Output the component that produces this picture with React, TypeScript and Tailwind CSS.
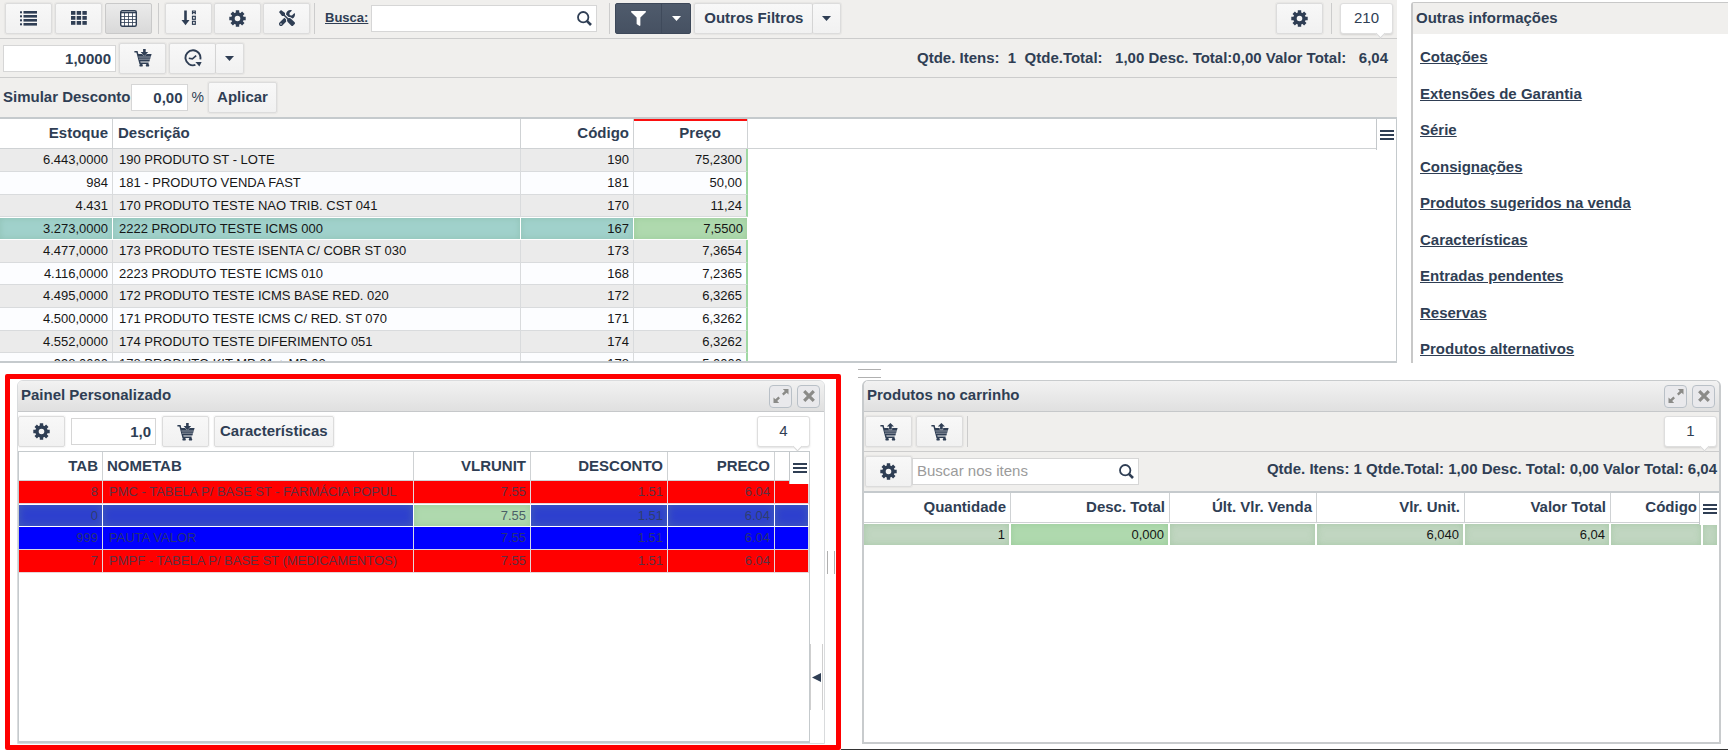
import type { ReactNode } from "react";
import { FaFilter, FaTools } from "react-icons/fa";

const BTN =
  "flex h-[31px] items-center justify-center rounded-[2px] border border-[#dcdcdc] bg-gradient-to-b from-[#f8f8f8] to-[#f1f1f1] shadow-[0_0_1px_1px_rgba(0,0,0,0.04)]";

function ListIcon() {
  return (
    <svg width="17" height="15" viewBox="0 0 17 15" fill="currentColor" aria-hidden="true">
      {[0, 4, 8, 12].map((y) => (
        <g key={y}>
          <rect x="0" y={y + 0.3} width="2" height="2" />
          <rect x="3.5" y={y} width="13.5" height="2.6" />
        </g>
      ))}
    </svg>
  );
}

function GridIcon() {
  return (
    <svg width="16" height="14" viewBox="0 0 16 14" fill="currentColor" aria-hidden="true">
      {[0, 5, 10].map((y) =>
        [0, 5.7, 11.4].map((x) => <rect key={`${x}-${y}`} x={x} y={y} width="4.4" height="3.8" />)
      )}
    </svg>
  );
}

function TableIcon() {
  return (
    <svg width="17" height="17" viewBox="0 0 17 17" aria-hidden="true">
      <rect x="0.7" y="0.7" width="15.6" height="15.6" rx="1.5" fill="#fff" stroke="currentColor" strokeWidth="1.4" />
      <path d="M1 2.6H16" stroke="currentColor" strokeWidth="1.4" />
      <path d="M1 6.5H16M1 9.5H16M1 12.5H16M4.5 3V16M8.5 3V16M12.5 3V16" stroke="currentColor" strokeWidth="0.8" />
    </svg>
  );
}

function GearIcon() {
  return (
    <svg width="17" height="17" viewBox="0 0 17 17" fill="none" stroke="currentColor" aria-hidden="true">
      <circle cx="8.5" cy="8.5" r="4.5" strokeWidth="3.4" />
      {[0, 45, 90, 135].map((a) => (
        <path
          key={a}
          d="M8.5 0.3V3.5M8.5 13.5V16.7"
          strokeWidth="3.4"
          transform={`rotate(${a} 8.5 8.5)`}
        />
      ))}
    </svg>
  );
}

function SortIcon() {
  return (
    <svg width="16" height="16" viewBox="0 0 16 16" fill="none" stroke="currentColor" aria-hidden="true">
      <path d="M4.5 0.5V11" strokeWidth="2.6" />
      <path d="M0.5 10H8.5L4.5 15.2Z" fill="currentColor" stroke="none" />
      <path d="M11.5 4.2V1H14.3V4.2M11.5 2.7H14.3" strokeWidth="1.2" />
      <rect x="11.5" y="6.3" width="2.8" height="3" strokeWidth="1.2" />
      <rect x="11.5" y="11.3" width="2.8" height="3" strokeWidth="1.2" />
    </svg>
  );
}

function SearchIcon() {
  return (
    <svg width="15" height="15" viewBox="0 0 15 15" fill="none" stroke="currentColor" aria-hidden="true">
      <circle cx="6.2" cy="6.2" r="5.2" strokeWidth="1.8" />
      <path d="M9.8 9.8L14 14" strokeWidth="2.6" />
    </svg>
  );
}

function CartIcon({ up = false }: { up?: boolean }) {
  return (
    <svg width="18" height="18" viewBox="0 0 18 18" fill="none" stroke="currentColor" aria-hidden="true">
      <path d="M0.4 2.8H3L6 14.2H14.6" strokeWidth="1.5" />
      <path d="M3.6 5H17.6L15.4 12.4H5.6Z" fill="currentColor" stroke="none" />
      <path d="M4.4 8H16.8M5 10.2H16.2" stroke="#f4f4f4" strokeWidth="0.5" />
      <path
        d={up ? "M10.4 0L14 3.6H11.7V6.6H9.1V3.6H6.8Z" : "M9.1 0H11.7V3H14.2L10.4 7L6.6 3H9.1Z"}
        fill="currentColor"
        stroke="#f4f4f4"
        strokeWidth="0.8"
        paintOrder="stroke"
      />
      <rect x="5.4" y="15" width="3.4" height="2.6" rx="1.2" fill="currentColor" stroke="none" />
      <rect x="11.8" y="15" width="3.4" height="2.6" rx="1.2" fill="currentColor" stroke="none" />
    </svg>
  );
}

function ClockIcon() {
  return (
    <svg width="18" height="18" viewBox="0 0 18 18" fill="none" stroke="currentColor" aria-hidden="true">
      <path d="M11.4 15.9A7.5 7.5 0 1 1 16.3 10.4" strokeWidth="1.9" />
      <path d="M4.8 9.2L8.4 9.8L12.2 6.6" strokeWidth="1.6" />
      <path d="M11.4 13H17.6L15.4 17.6Z" fill="currentColor" stroke="none" />
    </svg>
  );
}

function ExpandIcon() {
  return (
    <svg width="16" height="16" viewBox="0 0 16 16" fill="currentColor" aria-hidden="true">
      <path d="M9.8 1H15.5V6.5L13.6 4.8L10.6 7.4L9 5.8L11.8 3Z" />
      <path d="M6.2 15H0.5V9.5L2.4 11.2L5.4 8.6L7 10.2L4.2 13Z" />
    </svg>
  );
}

function CloseIcon() {
  return (
    <svg width="12" height="12" viewBox="0 0 12 12" fill="none" stroke="currentColor" strokeWidth="3.2" aria-hidden="true">
      <path d="M1.2 1.2L10.8 10.8M10.8 1.2L1.2 10.8" />
    </svg>
  );
}

function Caret() {
  return (
    <svg width="9" height="5" viewBox="0 0 9 5" fill="currentColor" aria-hidden="true">
      <path d="M0 0H9L4.5 5Z" />
    </svg>
  );
}

function IconButton({ label, children, active = false }: { label: string; children: ReactNode; active?: boolean }) {
  return (
    <button
      type="button"
      aria-label={label}
      className={
        active
          ? "flex h-[31px] w-[47px] items-center justify-center rounded-[2px] border border-[#c9c9c9] bg-gradient-to-b from-[#ebebeb] to-[#d9d9d9]"
          : `${BTN} w-[47px]`
      }
    >
      {children}
    </button>
  );
}

function Sep() {
  return <div className="h-[31px] w-px bg-[#cccccc]" />;
}

function Bubble({ children }: { children: ReactNode }) {
  return (
    <div className="relative flex h-[31px] w-[53px] items-center justify-center rounded-[3px] border border-[#dedede] bg-white shadow-[0_1px_2px_rgba(0,0,0,0.12)]">
      {children}
      <span className="absolute right-2 -bottom-1 size-[7px] rotate-45 border-r border-b border-[#d8d8d8] bg-white" />
    </div>
  );
}

function MenuButton({ className }: { className: string }) {
  return (
    <button
      type="button"
      aria-label="Colunas"
      className={`absolute top-0 right-0 flex w-5 flex-col items-center justify-center gap-[2px] border-l border-[#c4c8cb] bg-white ${className}`}
    >
      <span className="h-[2px] w-[14px] bg-[#2f3e54]" />
      <span className="h-[2px] w-[14px] bg-[#2f3e54]" />
      <span className="h-[2px] w-[14px] bg-[#2f3e54]" />
    </button>
  );
}

function PanelHeader({ title }: { title: string }) {
  const b = "flex size-[23px] items-center justify-center rounded-[4px] border border-[#b9c0c7] bg-[#e9e9ec] text-[#8b8b88]";
  return (
    <div className="flex h-[31px] shrink-0 items-center border-b border-[#c6c8ca] bg-gradient-to-b from-[#f2f2f2] to-[#e0e0e0] pr-1 pl-[3px]">
      <h2 className="grow pb-[2px] font-bold">{title}</h2>
      <div className="flex gap-[5px]">
        <button type="button" aria-label="Expandir" className={b}>
          <ExpandIcon />
        </button>
        <button type="button" aria-label="Fechar" className={b}>
          <CloseIcon />
        </button>
      </div>
    </div>
  );
}

const PRODUCTS = [
  ["6.443,0000", "190 PRODUTO ST - LOTE", "190", "75,2300"],
  ["984", "181 - PRODUTO VENDA FAST", "181", "50,00"],
  ["4.431", "170 PRODUTO TESTE NAO TRIB. CST 041", "170", "11,24"],
  ["3.273,0000", "2222 PRODUTO TESTE ICMS 000", "167", "7,5500"],
  ["4.477,0000", "173 PRODUTO TESTE ISENTA C/ COBR ST 030", "173", "7,3654"],
  ["4.116,0000", "2223 PRODUTO TESTE ICMS 010", "168", "7,2365"],
  ["4.495,0000", "172 PRODUTO TESTE ICMS BASE RED. 020", "172", "6,3265"],
  ["4.500,0000", "171 PRODUTO TESTE ICMS C/ RED. ST 070", "171", "6,3262"],
  ["4.552,0000", "174 PRODUTO TESTE DIFERIMENTO 051", "174", "6,3262"],
  ["998,0000", "178 PRODUTO KIT MP 01 + MP 02", "178", "5,0000"],
];

const LINKS = [
  "Cotações",
  "Extensões de Garantia",
  "Série",
  "Consignações",
  "Produtos sugeridos na venda",
  "Características",
  "Entradas pendentes",
  "Reservas",
  "Produtos alternativos",
];

const PRICES = [
  { tab: "8", name: "PMC - TABELA P/ BASE ST - FARMÁCIA POPUL", kind: "red" },
  { tab: "0", name: "", kind: "selected" },
  { tab: "999", name: "PAUTA VALOR", kind: "blue" },
  { tab: "7", name: "PMPF - TABELA P/ BASE ST (MEDICAMENTOS)", kind: "red" },
];

function ProductGrid() {
  return (
    <div className="relative min-h-0 grow overflow-hidden border-y-2 border-r border-[#c5cacd] bg-white">
      <table className="w-full table-fixed border-separate border-spacing-0">
        <colgroup>
          <col className="w-[113px]" />
          <col className="w-[408px]" />
          <col className="w-[113px]" />
          <col className="w-[114px]" />
          <col />
        </colgroup>
        <thead>
          <tr className="h-[30px] *:border-b *:border-[#cfd2d4]">
            <th className="border-r pr-1 text-right">Estoque</th>
            <th className="border-r pl-[5px] text-left">Descrição</th>
            <th className="border-r pr-1 text-right">Código</th>
            <th className="border-r pr-[26px] text-right shadow-[inset_0_2px_0_#fb0f0f]">Preço</th>
            <th />
          </tr>
        </thead>
        <tbody className="text-[13px] text-[#161616]">
          {PRODUCTS.map(([stock, name, code, price], i) => {
            const sel = i === 3;
            const base = sel
              ? "border-y border-r border-white bg-[#a0d1cb] bg-clip-padding shadow-[inset_0_0_6px_rgba(140,190,175,0.8)]"
              : i % 2 === 0
                ? "border-r border-b border-[#d9dbdd] bg-[#ebebeb]"
                : "border-r border-b border-[#d9dbdd] bg-[#fcfdff]";
            const last = sel
              ? "border-y border-r border-white bg-[#afd9ae] bg-clip-padding shadow-[inset_0_0_6px_rgba(150,200,150,0.8)]"
              : i % 2 === 0
                ? "border-r-2 border-b border-r-[#9fd8a3] border-b-[#d9dbdd] bg-[#ebebeb]"
                : "border-r-2 border-b border-r-[#9fd8a3] border-b-[#d9dbdd] bg-[#fcfdff]";
            return (
              <tr key={code} className="h-[23px] nth-[3n]:h-[22px]">
                <td className={`${base} pr-1 text-right`}>{stock}</td>
                <td className={`${base} pl-[6px]`}>{name}</td>
                <td className={`${base} pr-1 text-right`}>{code}</td>
                <td className={`${last} pr-1 text-right`}>{price}</td>
                <td />
              </tr>
            );
          })}
        </tbody>
      </table>
      <MenuButton className="h-[31px]" />
    </div>
  );
}

function CustomPanel() {
  return (
    <section className="flex min-w-0 grow flex-col overflow-hidden rounded-t-[6px] border border-[#d9dbdd]">
      <PanelHeader title="Painel Personalizado" />
      <div className="flex h-[39px] shrink-0 items-center pr-[14px]">
        <IconButton label="Configurações do painel">
          <GearIcon />
        </IconButton>
        <input
          aria-label="Quantidade"
          defaultValue="1,0"
          className="ml-[6px] h-[27px] w-[85px] border border-[#d6d6d6] bg-white pr-1 text-right font-bold"
        />
        <div className="ml-[6px] flex gap-[5px]">
          <IconButton label="Adicionar ao carrinho">
            <CartIcon />
          </IconButton>
          <button type="button" className={`${BTN} px-[5px] font-bold`}>
            Características
          </button>
        </div>
        <div className="ml-auto">
          <Bubble>4</Bubble>
        </div>
      </div>
      <div className="flex min-h-0 grow">
        <div className="relative grow overflow-hidden border border-b-2 border-[#c5cacd]">
          <table className="w-full table-fixed border-separate border-spacing-0">
            <colgroup>
              <col className="w-[84px]" />
              <col className="w-[311px]" />
              <col className="w-[117px]" />
              <col className="w-[137px]" />
              <col className="w-[107px]" />
              <col />
            </colgroup>
            <thead>
              <tr className="h-[29px] *:border-b *:border-[#cfd2d4]">
                <th className="border-r pr-1 text-right">TAB</th>
                <th className="border-r pl-1 text-left">NOMETAB</th>
                <th className="border-r pr-1 text-right">VLRUNIT</th>
                <th className="border-r pr-1 text-right">DESCONTO</th>
                <th className="border-r pr-1 text-right">PRECO</th>
                <th />
              </tr>
            </thead>
            <tbody className="text-[13px] text-[#2f3e54]/80">
              {PRICES.map((p) => {
                const base =
                  p.kind === "red"
                    ? "border-r border-b border-[#e6d5d8] bg-[#ff0000] bg-clip-padding"
                    : p.kind === "blue"
                      ? "border-r border-b border-[#d5d8e6] bg-[#0000ff] bg-clip-padding"
                      : "border-y border-r border-white bg-[#2e40cf] bg-clip-padding shadow-[inset_0_0_8px_rgba(70,100,180,0.9)]";
                const unit =
                  p.kind === "selected"
                    ? "border-y border-r border-white bg-[#afd9ae] bg-clip-padding shadow-[inset_0_0_6px_rgba(150,200,150,0.8)]"
                    : base;
                return (
                  <tr key={p.tab} className="h-[23px]">
                    <td className={`${base} pr-1 text-right`}>{p.tab}</td>
                    <td className={`${base} pl-[6px]`}>{p.name}</td>
                    <td className={`${unit} pr-1 text-right`}>7.55</td>
                    <td className={`${base} pr-1 text-right`}>1.51</td>
                    <td className={`${base} pr-1 text-right`}>6.04</td>
                    <td className={base} />
                  </tr>
                );
              })}
            </tbody>
          </table>
          <MenuButton className="h-8" />
        </div>
        <div className="flex w-[14px] shrink-0 flex-col justify-end pb-[33px]">
          <button
            type="button"
            aria-label="Recolher"
            className="flex h-[66px] w-[13px] items-center justify-center border-x border-[#cfcfcf]"
          >
            <svg width="9" height="9" viewBox="0 0 9 9" fill="currentColor" aria-hidden="true">
              <path d="M9 0V9L0 4.5Z" />
            </svg>
          </button>
        </div>
      </div>
    </section>
  );
}

function CartPanel() {
  const cell = "border-t border-r-2 border-white bg-[#c1d6c1] bg-clip-padding shadow-[inset_0_0_7px_rgba(165,200,165,0.9)]";
  return (
    <section className="flex min-h-0 grow flex-col overflow-hidden rounded-t-[6px] border-2 border-t border-[#c8cbcd]">
      <PanelHeader title="Produtos no carrinho" />
      <div className="flex h-10 shrink-0 items-center border-b border-[#cccccc] bg-[#f0efed] pr-[2px] pl-px">
        <div className="flex items-center gap-1">
          <IconButton label="Carregar carrinho">
            <CartIcon up />
          </IconButton>
          <IconButton label="Descarregar carrinho">
            <CartIcon up />
          </IconButton>
          <Sep />
        </div>
        <div className="ml-auto">
          <Bubble>1</Bubble>
        </div>
      </div>
      <div className="flex h-[39px] shrink-0 items-center bg-[#f0efed] pr-[2px] pl-px">
        <IconButton label="Configurações do carrinho">
          <GearIcon />
        </IconButton>
        <div className="flex h-[27px] w-[227px] items-center border border-[#d6d6d6] bg-white pr-1">
          <input
            aria-label="Buscar nos itens"
            placeholder="Buscar nos itens"
            className="min-w-0 grow pl-1 outline-none placeholder:text-[#9b9b9b]"
          />
          <SearchIcon />
        </div>
        <p className="ml-auto pb-1 font-bold whitespace-pre">
          Qtde. Itens: 1 Qtde.Total: 1,00 Desc. Total: 0,00 Valor Total: 6,04
        </p>
      </div>
      <div className="relative min-h-0 grow overflow-hidden border-t-2 border-[#c5cacd] bg-white">
        <table className="w-full table-fixed border-separate border-spacing-0">
          <colgroup>
            <col className="w-[147px]" />
            <col className="w-[159px]" />
            <col className="w-[147px]" />
            <col className="w-[148px]" />
            <col className="w-[146px]" />
            <col className="w-[92px]" />
            <col />
          </colgroup>
          <thead>
            <tr className="h-[30px] *:border-b *:border-[#cfd2d4]">
              <th className="border-r pr-1 text-right">Quantidade</th>
              <th className="border-r pr-1 text-right">Desc. Total</th>
              <th className="border-r pr-1 text-right">Últ. Vlr. Venda</th>
              <th className="border-r pr-1 text-right">Vlr. Unit.</th>
              <th className="border-r pr-1 text-right">Valor Total</th>
              <th className="pr-[6px] text-right">Código</th>
              <th />
            </tr>
          </thead>
          <tbody className="text-[13px] text-[#161616]">
            <tr className="h-[22px]">
              <td className={`${cell} pr-1 text-right`}>1</td>
              <td className="border-t border-r-2 border-white bg-[#afd9ae] bg-clip-padding pr-1 text-right shadow-[inset_0_0_6px_rgba(150,200,150,0.8)]">
                0,000
              </td>
              <td className={cell} />
              <td className={`${cell} pr-1 text-right`}>6,040</td>
              <td className={`${cell} pr-1 text-right`}>6,04</td>
              <td className={cell} />
              <td className={cell} />
            </tr>
          </tbody>
        </table>
        <MenuButton className="h-8" />
      </div>
    </section>
  );
}

export default function App() {
  return (
    <div className="flex h-screen flex-col overflow-hidden bg-white font-['Liberation_Sans',Arial,sans-serif] text-[15px] text-[#2f3e54]">
      <div className="flex min-h-0 grow-[363] basis-0">
        <main className="flex min-w-0 grow flex-col bg-[#f0efed]">
          <div className="flex h-[39px] shrink-0 items-center border-b border-[#cccccc] pr-1 pb-[2px] pl-[5px]">
            <div className="flex items-center gap-[3px]">
              <IconButton label="Lista">
                <ListIcon />
              </IconButton>
              <IconButton label="Grade">
                <GridIcon />
              </IconButton>
              <IconButton label="Tabela" active>
                <TableIcon />
              </IconButton>
            </div>
            <div className="mx-[6px]">
              <Sep />
            </div>
            <div className="flex items-center gap-[2px]">
              <IconButton label="Ordenar">
                <SortIcon />
              </IconButton>
              <IconButton label="Configurações">
                <GearIcon />
              </IconButton>
              <IconButton label="Ferramentas">
                <FaTools size={16} />
              </IconButton>
            </div>
            <div className="mr-[10px] ml-1">
              <Sep />
            </div>
            <label htmlFor="busca" className="text-[13px] font-bold underline">
              Busca:
            </label>
            <div className="ml-[3px] flex h-[27px] w-[226px] items-center border border-[#d6d6d6] bg-white pr-1">
              <input id="busca" className="min-w-0 grow pl-1 outline-none" />
              <SearchIcon />
            </div>
            <div className="mr-[5px] ml-3">
              <Sep />
            </div>
            <div className="flex h-[31px] rounded-[2px] border border-[#3d4859] bg-gradient-to-b from-[#4f5b6c] to-[#465162] text-white">
              <button type="button" aria-label="Filtrar" className="flex w-[46px] items-center justify-center border-r border-[#3f4a5b]">
                <FaFilter size={15} />
              </button>
              <button type="button" aria-label="Opções de filtro" className="flex w-7 items-center justify-center">
                <Caret />
              </button>
            </div>
            <div className="ml-[3px] flex">
              <button type="button" className={`${BTN} w-[119px] font-bold`}>
                Outros Filtros
              </button>
              <button type="button" aria-label="Mais filtros" className={`${BTN} w-7 border-l-0`}>
                <Caret />
              </button>
            </div>
            <div className="ml-auto flex items-center gap-[8px]">
              <IconButton label="Preferências">
                <GearIcon />
              </IconButton>
              <Sep />
              <Bubble>210</Bubble>
            </div>
          </div>
          <div className="flex h-[39px] shrink-0 items-center border-b border-[#cccccc] pr-[9px] pl-[3px]">
            <input
              aria-label="Quantidade do item"
              defaultValue="1,0000"
              className="h-[27px] w-[113px] border border-[#d6d6d6] bg-white pr-1 text-right font-bold"
            />
            <div className="ml-[3px] flex gap-[3px]">
              <IconButton label="Adicionar">
                <CartIcon />
              </IconButton>
              <div className="flex">
                <IconButton label="Histórico">
                  <ClockIcon />
                </IconButton>
                <button type="button" aria-label="Opções de histórico" className={`${BTN} w-[28px] border-l-0`}>
                  <Caret />
                </button>
              </div>
            </div>
            <p className="ml-auto font-bold whitespace-pre">
              {"Qtde. Itens:  1  Qtde.Total:   1,00 Desc. Total:0,00 Valor Total:   6,04"}
            </p>
          </div>
          <div className="flex h-[39px] shrink-0 items-center pl-[3px]">
            <label htmlFor="desconto" className="font-bold">
              Simular Desconto
            </label>
            <input
              id="desconto"
              defaultValue="0,00"
              className="h-[27px] w-[57px] border border-[#d6d6d6] bg-white pr-1 text-right font-bold"
            />
            <span className="mx-1 text-[14px]">%</span>
            <button type="button" className={`${BTN} w-[69px] font-bold`}>
              Aplicar
            </button>
          </div>
          <ProductGrid />
        </main>
        <aside className="mt-[2px] ml-[14px] flex w-[317px] shrink-0 flex-col overflow-hidden rounded-tl-[3px] border-t border-l-2 border-[#c8c8c8]">
          <h2 className="flex h-[31px] shrink-0 items-center bg-[#f0efed] pl-[3px] font-bold">Outras informações</h2>
          <ul className="flex grow flex-col justify-between pt-[14px] pb-[5px] pl-[7px] font-bold">
            {LINKS.map((l) => (
              <li key={l} className="leading-[18px]">
                <a href="#" className="underline">
                  {l}
                </a>
              </li>
            ))}
          </ul>
        </aside>
      </div>

      <div className="relative grid min-h-0 grow-[387] basis-0 grid-cols-[841fr_887fr] grid-rows-[minmax(0,1fr)]">
        <div className="absolute top-[6px] left-1/2 h-[9px] w-[23px] -translate-x-1.5 border-y border-[#b0b0b0]" />
        <div className="flex min-w-0 pt-[11px] pl-[5px]">
          <div className="flex min-w-0 grow rounded-[2px] border-[5px] border-[#ff0000] pt-px pb-px pl-[7px]">
            <CustomPanel />
            <div className="flex w-[11px] shrink-0 items-center justify-center">
              <div className="h-[23px] w-2 border-x border-[#b0b0b0]" />
            </div>
          </div>
        </div>
        <div className="flex min-w-0 flex-col pt-[17px]">
          <div className="mb-[5px] flex min-h-0 grow flex-col pr-[7px] pl-[21px]">
            <CartPanel />
          </div>
          <div className="h-px shrink-0 bg-[#333333]" />
        </div>
      </div>
    </div>
  );
}
